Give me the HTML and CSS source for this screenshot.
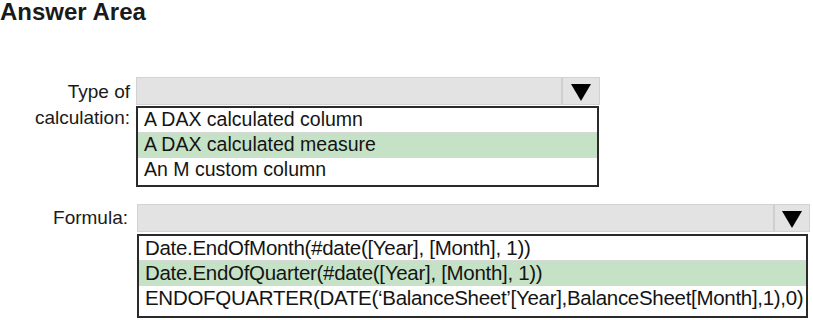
FILE: index.html
```html
<!DOCTYPE html>
<html>
<head>
<meta charset="utf-8">
<link rel="stylesheet" href="styles.css">
</head>
<body>
<h1 class="title">Answer Area</h1>
<div class="field field-type">
  <div class="labels">
    <div class="label">Type of</div>
    <div class="label">calculation:</div>
  </div>
  <div class="dropdown">
    <div class="select"><div class="select-value"></div><div class="select-btn"><span class="tri"></span></div></div>
    <div class="options">
      <div class="opt">A DAX calculated column</div>
      <div class="opt sel">A DAX calculated measure</div>
      <div class="opt">An M custom column</div>
    </div>
  </div>
</div>
<div class="field field-formula">
  <div class="labels">
    <div class="label">Formula:</div>
  </div>
  <div class="dropdown">
    <div class="select"><div class="select-value"></div><div class="select-btn"><span class="tri"></span></div></div>
    <div class="options">
      <div class="opt">Date.EndOfMonth(#date([Year], [Month], 1))</div>
      <div class="opt sel">Date.EndOfQuarter(#date([Year], [Month], 1))</div>
      <div class="opt">ENDOFQUARTER(DATE(‘BalanceSheet’[Year],BalanceSheet[Month],1),0)</div>
    </div>
  </div>
</div>
</body>
</html>
```
FILE: styles.css
```css
html, body { margin: 0; padding: 0; background: #fff; }
body { font-family: "Liberation Sans", Arial, sans-serif; color: #111; width: 813px; height: 320px; overflow: hidden; }
.title { font-size: 24px; font-weight: bold; margin: 0; padding: 0; line-height: 23px; height: 23px; color: #1a1a1a; }
.field { display: flex; align-items: flex-start; }
.field-type { margin-top: 54px; }
.field-formula { margin-top: 17px; }
.labels { width: 130px; text-align: right; font-size: 19px; line-height: 26px; padding-top: 1px; color: #1a1a1a; }
.field-type .labels .label:first-child { line-height: 27px; }
.field-formula .labels { width: 128px; }
.dropdown { margin-left: 6px; display: flex; flex-direction: column; }
.field-type .dropdown { width: 464px; }
.field-formula .dropdown { margin-left: 9px; width: 673px; }
.select { display: flex; height: 28px; background: #e3e3e3; border: 1px solid #d2d2d2; box-sizing: border-box; }
.select-value { flex: 1; }
.select-btn { width: 36px; border-left: 2px solid #cfcfcf; display: flex; align-items: center; justify-content: center; }
.field-formula .select-btn { width: 34px; }
.tri { width: 0; height: 0; border-left: 10px solid transparent; border-right: 10px solid transparent; border-top: 17px solid #000; margin-top: 2px; }
.options { border: 2px solid #2a2a2a; margin-top: 1px; background: #fff; margin-right: 1px; }
.field-formula .options { margin-top: 2px; margin-right: 2px; }
.opt { font-size: 19.5px; line-height: 22px; padding-bottom: 2px; padding-left: 6px; border-top: 1px solid #d8d8d8; white-space: nowrap; color: #141414; }
.opt:first-child { border-top: none; }
.opt:last-child { padding-bottom: 5px; }
.field-formula .opt { font-size: 20.5px; letter-spacing: -0.3px; line-height: 24px; padding-bottom: 0; }
.field-formula .opt:last-child { padding-bottom: 6px; }
.opt.sel { background: #c6e2c6; }
```
